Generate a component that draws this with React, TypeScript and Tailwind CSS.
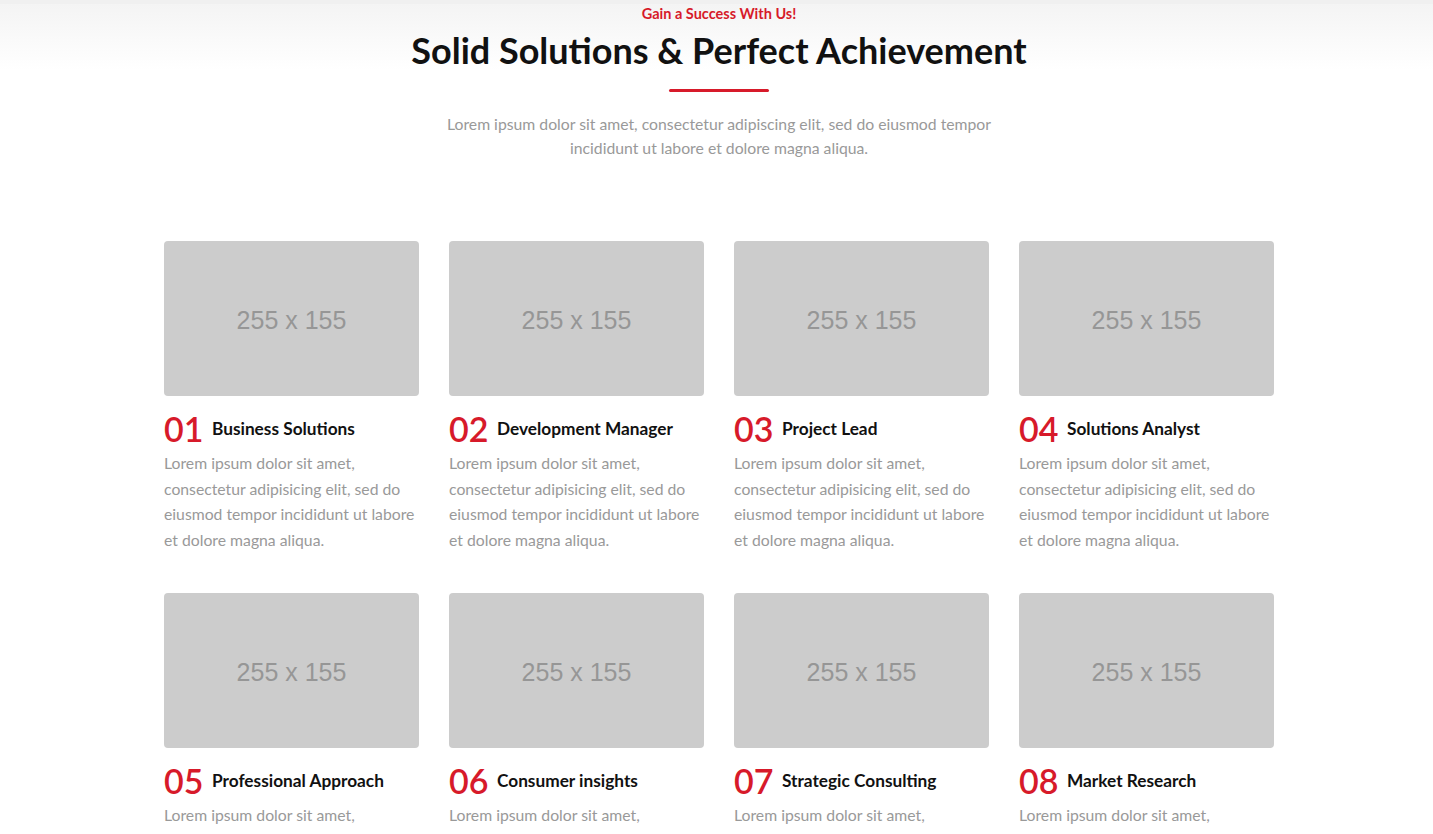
import React from "react";

const items = [
  ["01", "Business Solutions"],
  ["02", "Development Manager"],
  ["03", "Project Lead"],
  ["04", "Solutions Analyst"],
  ["05", "Professional Approach"],
  ["06", "Consumer insights"],
  ["07", "Strategic Consulting"],
  ["08", "Market Research"],
];

export default function App() {
  return (
    <div className="min-h-[834px] bg-white font-['Lato',sans-serif] overflow-hidden">
      <div className="border-t-4 border-[#f0f0f0] bg-gradient-to-b from-[#f4f4f4] to-white h-[70px] absolute left-0 right-0 top-0" />
      <div className="relative pl-[5px]">
        <div className="flex flex-col items-center">
          <p className="text-[14.5px] leading-[20px] mt-[4px] font-bold text-[#d71a2a]">Gain a Success With Us!</p>
          <h2 className="text-[36px] leading-[44px] font-bold text-[#111] mt-[4px]">Solid Solutions &amp; Perfect Achievement</h2>
          <div className="w-[100px] h-[3px] rounded-full bg-[#d71a2a] mt-[17px]" />
          <p className="text-[15.75px] leading-[24px] text-[#999] text-center w-[580px] mt-[20px]">
            Lorem ipsum dolor sit amet, consectetur adipiscing elit, sed do eiusmod tempor incididunt ut labore et dolore magna aliqua.
          </p>
        </div>
        <div className="w-[1110px] mx-auto grid grid-cols-4 gap-x-[30px] gap-y-[41px] mt-[81px]">
          {items.map(([n, t]) => (
            <div key={n} className="flex flex-col">
              <div className="h-[155px] w-[255px] rounded-[4px] bg-[#cccccc] flex items-center justify-center pt-[4px] text-[25px] text-[#969696] font-['Liberation_Sans',sans-serif]">
                255 x 155
              </div>
              <div className="flex items-center mt-[18px] h-[30px]">
                <span className="text-[34px] leading-[30px] text-[#d71a2a] font-semibold w-[48px]">{n}</span>
                <span className="text-[17.25px] leading-[22px] font-bold text-[#111]">{t}</span>
              </div>
              <p className="text-[15.75px] leading-[25.5px] text-[#999] mt-[6px]">
                Lorem ipsum dolor sit amet, consectetur adipisicing elit, sed do eiusmod tempor incididunt ut labore et dolore magna aliqua.
              </p>
            </div>
          ))}
        </div>
      </div>
    </div>
  );
}
